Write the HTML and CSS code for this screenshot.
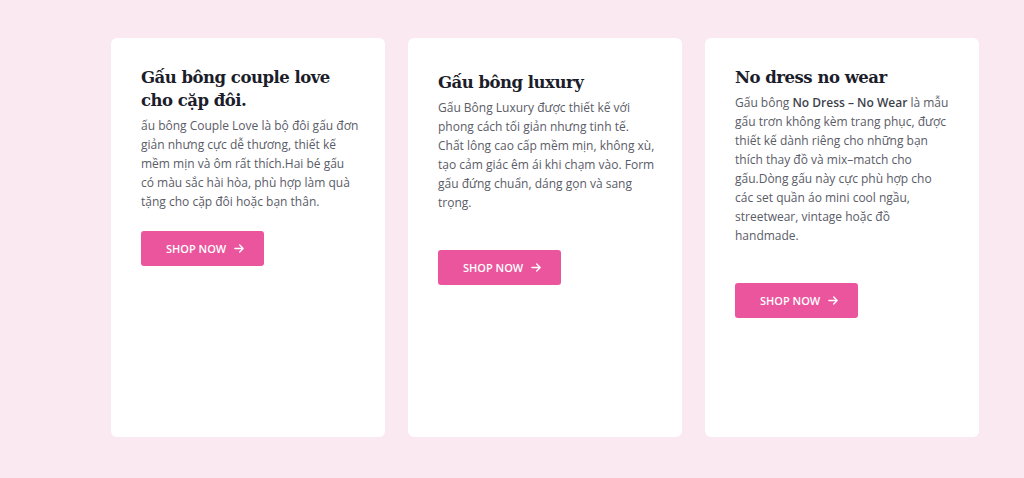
FILE: index.html
```html
<!DOCTYPE html>
<html lang="vi">
<head>
 <meta charset="utf-8">
 <title>Gấu bông</title>
 <link rel="stylesheet" href="styles.css">
</head>
<body>

 <section class="collections">

 <div class="card">
 <h3 class="card-title">Gấu bông couple love cho cặp đôi.</h3>
 <p class="card-text">ấu bông Couple Love là bộ đôi gấu đơn giản nhưng cực dễ thương, thiết kế mềm mịn và ôm rất thích.Hai bé gấu có màu sắc hài hòa, phù hợp làm quà tặng cho cặp đôi hoặc bạn thân.</p>
 <a href="#" class="shop-btn">Shop now
 <svg class="arrow" viewBox="0 0 448 512"><path d="M438.6 278.6c12.5-12.5 12.5-32.8 0-45.3l-160-160c-12.5-12.5-32.8-12.5-45.3 0s-12.5 32.8 0 45.3L338.8 224 32 224c-17.7 0-32 14.3-32 32s14.3 32 32 32l306.7 0L233.4 393.4c-12.5 12.5-12.5 32.8 0 45.3s32.8 12.5 45.3 0l160-160z"/></svg>
 </a>
 </div>

 <div class="card card-low">
 <h3 class="card-title">Gấu bông luxury</h3>
 <p class="card-text card-text-spaced">Gấu Bông Luxury được thiết kế với phong cách tối giản nhưng tinh tế. Chất lông cao cấp mềm mịn, không xù, tạo cảm giác êm ái khi chạm vào. Form gấu đứng chuẩn, dáng gọn và sang trọng.</p>
 <a href="#" class="shop-btn">Shop now
 <svg class="arrow" viewBox="0 0 448 512"><path d="M438.6 278.6c12.5-12.5 12.5-32.8 0-45.3l-160-160c-12.5-12.5-32.8-12.5-45.3 0s-12.5 32.8 0 45.3L338.8 224 32 224c-17.7 0-32 14.3-32 32s14.3 32 32 32l306.7 0L233.4 393.4c-12.5 12.5-12.5 32.8 0 45.3s32.8 12.5 45.3 0l160-160z"/></svg>
 </a>
 </div>

 <div class="card">
 <h3 class="card-title">No dress no wear</h3>
 <p class="card-text card-text-spaced">Gấu bông <strong>No Dress – No Wear</strong> là mẫu gấu trơn không kèm trang phục, được thiết kế dành riêng cho những bạn thích thay đồ và mix–match cho gấu.Dòng gấu này cực phù hợp cho<br>các set quần áo mini cool ngầu, streetwear, vintage hoặc đồ handmade.</p>
 <a href="#" class="shop-btn">Shop now
 <svg class="arrow" viewBox="0 0 448 512"><path d="M438.6 278.6c12.5-12.5 12.5-32.8 0-45.3l-160-160c-12.5-12.5-32.8-12.5-45.3 0s-12.5 32.8 0 45.3L338.8 224 32 224c-17.7 0-32 14.3-32 32s14.3 32 32 32l306.7 0L233.4 393.4c-12.5 12.5-12.5 32.8 0 45.3s32.8 12.5 45.3 0l160-160z"/></svg>
 </a>
 </div>

 </section>

</body>
</html>
```

FILE: styles.css
```css
 body {
 margin: 0;
 padding: 0;
 background: #fae9f1;
 font-family: "Open Sans", "Noto Sans", sans-serif;
 }

 .collections {
 display: grid;
 grid-template-columns: repeat(3, 274px);
 gap: 23px;
 padding: 38px 0 0 111px;
 }

 .card {
 height: 399px;
 box-sizing: border-box;
 background: #ffffff;
 border-radius: 6px;
 padding: 28px 26px 28px 30px;
 }

 .card-low {
 padding-top: 33px;
 }

 .card-title {
 margin: 0;
 font-family: "DejaVu Serif", serif;
 font-weight: bold;
 font-size: 16.5px;
 letter-spacing: -0.5px;
 line-height: 23px;
 color: #1c1d2b;
 }

 .card-text {
 margin: 4px 0 20px;
 font-size: 12px;
 line-height: 19px;
 color: #5a5c67;
 }

 .card-text strong {
 font-weight: 600;
 color: #3d3f4a;
 }

 .card-text-spaced {
 margin-bottom: 38px;
 }

 .shop-btn {
 display: flex;
 align-items: center;
 gap: 8px;
 width: 123px;
 height: 35px;
 box-sizing: border-box;
 padding-left: 25px;
 background: #eb559d;
 border-radius: 3px;
 color: #ffffff;
 text-decoration: none;
 text-transform: uppercase;
 font-size: 11px;
 font-weight: 600;
 }

 .arrow {
 width: 10px;
 height: 11px;
 fill: #ffffff;
 }
```
